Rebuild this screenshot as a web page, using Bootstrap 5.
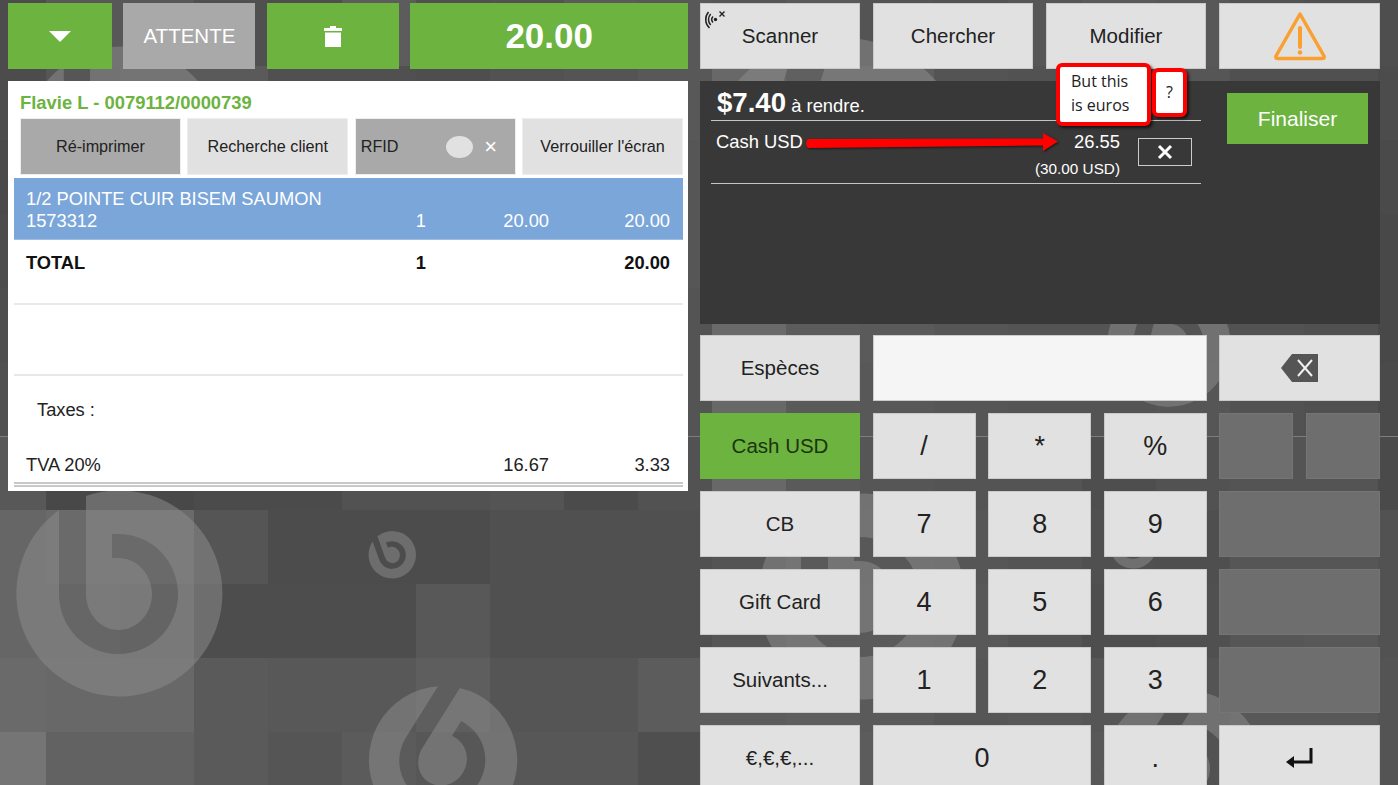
<!DOCTYPE html>
<html lang="fr">
<head>
  <meta charset="UTF-8" />
  <meta name="viewport" content="width=device-width, initial-scale=1" />
  <title>Caisse</title>
  <link href="https://cdn.jsdelivr.net/npm/bootstrap@5.3.0/dist/css/bootstrap.min.css" rel="stylesheet" />
  <style>
    body {
      background-color: #555;
      font-family: "Liberation Sans", Arial, sans-serif;
      color: #222;
    }
    .pos-screen { width: 1398px; height: 785px; }
    .bg-art { left: 0; top: 0; width: 1398px; height: 785px; }
    .pos-cols { gap: 12px; padding: 3px 18px 0 8px; }
    .pos-side { width: 680px; flex: none; }

    .pad-btn {
      padding: 0;
      border: 1px solid #c9c9c9;
      border-radius: 0;
      background-color: #e1e1e1;
      color: #222;
      font-size: 20.5px;
      line-height: 1.2;
    }
    .pad-btn.is-green { background-color: #6cb33f; border-color: #6cb33f; color: #fff; }
    .pad-btn.is-gray { background-color: #a9a9a9; border-color: #a9a9a9; color: #fff; }
    .pad-btn.is-off { background-color: #6e6e6e; border-color: #757575; }
    .pad-btn.is-key { font-size: 27px; }
    .pad-btn.is-green.on-dark { color: #1c3310; }

    .top-left { display: grid; grid-template-columns: 104px 132px 132px 278px; column-gap: 11.4px; height: 66px; margin-bottom: 12px; }
    .top-right { display: grid; grid-template-columns: 160px 160px 160px 161px; column-gap: 13px; height: 66px; margin-bottom: 12px; }
    .total-big { font-size: 35px; font-weight: 700; }

    .ticket { height: 410px; background: #fff; padding-top: 10px; }
    .ticket-title { color: #6cb33f; font-size: 18.4px; font-weight: 700; height: 27px; line-height: 24px; padding-left: 12px; }
    .ticket-actions { display: grid; grid-template-columns: repeat(4, 1fr); column-gap: 6.4px; height: 57px; margin: 0 5px 3px 12px; }
    .ticket-actions .pad-btn { font-size: 16.2px; border-color: #eee; padding-top: 1px; }
    .ticket-actions .is-gray { color: #222; }
    .rfid-dot { width: 27px; height: 22px; border-radius: 50%; background: #e1e1e1; margin-left: auto; }
    .rfid-x { color: #fff; font-size: 22px; width: 36px; text-align: center; margin-right: 6px; }
    .rfid-label { padding-left: 5px; }

    .line-row { display: grid; grid-template-columns: 1fr 60px 123px 121px; padding: 0 13px 0 12px; margin: 0 5px 0 6px; font-size: 18.3px; line-height: 21px; }
    .line-sel { background: #7ba6da; color: #fff; height: 62px; padding-top: 10px; line-height: 21.500px; border-bottom: 1px solid #9dbde3; }
    .on-line2 { padding-top: 21.500px; }
    .line-total { height: 65px; padding-top: 12px; font-weight: 700; color: #111; border-bottom: 2px solid #e8e8e8; margin-top: 0; }
    .line-gap { height: 71px; margin: 0 5px 0 6px; border-bottom: 2px solid #e8e8e8; }
    .tax-head { margin: 23px 0 0 29px; font-size: 18.3px; line-height: 21px; }
    .tax-row { margin-top: 34px; height: 33px; padding-bottom: 8px; border-bottom: 5px double #c8c8c8; }

    .pay-panel { height: 243px; background: #383838; color: #fff; margin-bottom: 11px; }
    .pay-lines { width: 490px; margin-left: 11px; }
    .pay-change { height: 40px; padding: 4px 0 0 6px; border-bottom: 1px solid #c4c4c4; font-size: 18.4px; line-height: 36px; }
    .pay-change b { font-size: 27.6px; }
    .pay-line { height: 63px; padding: 10px 9px 0 5px; border-bottom: 1px solid #c4c4c4; font-size: 18.4px; line-height: 22px; }
    .pay-sub { font-size: 15.3px; margin-top: 5px; }
    .pay-x { width: 54px; height: 28px; margin: 7px 0 0 18px; border: 1px solid #ccc; background: transparent; padding: 0; }
    .pay-end { width: 141px; height: 51px; margin: 12px 0 0 26px; font-size: 21px; }

    .keypad {
      display: grid;
      grid-template-columns: 160px 103px 103px 103px 74px 74px;
      grid-auto-rows: 66px;
      gap: 12px 12.6px;
    }
    .key-wide-3 { grid-column: span 3; }
    .key-wide-2 { grid-column: span 2; }
    .key-input { background: #f5f5f5; border: 1px solid #ccc; }

    .note-box {
      background: #fff;
      border: 4px solid #f00;
      border-radius: 6px;
      box-shadow: 2px 2px 3px rgba(0, 0, 0, .65);
      font-family: "Open Sans", sans-serif;
      font-size: 16px;
      line-height: 24px;
      color: #222;
    }
    .note-a { left: 1056px; top: 63px; width: 95px; height: 63px; padding: 2px 0 0 11px; }
    .note-b { left: 1152px; top: 68px; width: 35px; height: 49px; text-align: center; padding-top: 8px; }
    .note-arrow { left: 0; top: 0; width: 1398px; height: 785px; pointer-events: none; filter: drop-shadow(1px 1px 1px rgba(0, 0, 0, .6)); }
  </style>
</head>
<body>

  <div class="pos-screen position-relative overflow-hidden">

    <!-- Background mosaic + logos -->
    <svg class="bg-art position-absolute" viewBox="0 0 1398 785" aria-hidden="true">
      <defs>
        <path id="logoMark" d="M-59,-84 A103,103 0 1 0 -32,-98 L-32,0 C-32,21 -16,36 0,36 C19,36 34,20 34,0 C34,-20 19,-36 0,-36 L-6,-36 L-6,-60 L0,-60 C34,-60 60,-33 60,0 C60,33 34,60 0,60 C-33,60 -59,33 -59,0 Z" fill="#8c8c8c" fill-opacity=".53" />
      </defs>
      <g id="tiles"></g>
      <rect x="0" y="436" width="1398" height="1" fill="#7d7d7d" />
      <use href="#logoMark" transform="translate(118 594)" />
      <use href="#logoMark" transform="translate(392 555) rotate(-20) scale(.23)" />
      <use href="#logoMark" transform="translate(442 760) rotate(32) scale(.72)" />
      <use href="#logoMark" transform="translate(121 147) scale(.97)" />
      <use href="#logoMark" transform="translate(835 171) rotate(18) scale(1.3)" />
      <use href="#logoMark" transform="translate(860 597)" />
      <use href="#logoMark" transform="translate(1133 545) scale(.23)" />
      <use href="#logoMark" transform="translate(1168 345) rotate(15) scale(.6)" />
      <use href="#logoMark" transform="translate(1183 770) rotate(32) scale(.78)" />
    </svg>

    <div class="pos-cols d-flex position-relative">

      <!-- Left column: ticket -->
      <div class="pos-side">
        <div class="top-left">
          <button class="btn pad-btn is-green d-flex align-items-center justify-content-center">
            <svg width="22" height="11" viewBox="0 0 22 11"><polygon points="0,0 22,0 11,11" fill="#fff" /></svg>
          </button>
          <button class="btn pad-btn is-gray">ATTENTE</button>
          <button class="btn pad-btn is-green d-flex align-items-center justify-content-center">
            <svg width="18" height="21" viewBox="0 0 18 21"><path d="M6 0h6v2h6v3H0V2h6zM1 6.500h16V21H1z" fill="#fff" /></svg>
          </button>
          <button class="btn pad-btn is-green total-big">20.00</button>
        </div>

        <div class="ticket">
          <div class="ticket-title">Flavie L - 0079112/0000739</div>
          <div class="ticket-actions">
            <button class="btn pad-btn is-gray">Ré-imprimer</button>
            <button class="btn pad-btn">Recherche client</button>
            <button class="btn pad-btn is-gray d-flex align-items-center">
              <span class="rfid-label">RFID</span>
              <span class="rfid-dot"></span>
              <span class="rfid-x">×</span>
            </button>
            <button class="btn pad-btn">Verrouiller l'écran</button>
          </div>

          <div class="line-row line-sel">
            <div>1/2 POINTE CUIR BISEM SAUMON<br />1573312</div>
            <div class="text-end on-line2">1</div>
            <div class="text-end on-line2">20.00</div>
            <div class="text-end on-line2">20.00</div>
          </div>
          <div class="line-row line-total">
            <div>TOTAL</div>
            <div class="text-end">1</div>
            <div></div>
            <div class="text-end">20.00</div>
          </div>
          <div class="line-gap"></div>
          <div class="tax-head">Taxes :</div>
          <div class="line-row tax-row">
            <div>TVA 20%</div>
            <div></div>
            <div class="text-end">16.67</div>
            <div class="text-end">3.33</div>
          </div>
        </div>
      </div>

      <!-- Right column: payment -->
      <div class="pos-side">
        <div class="top-right">
          <button class="btn pad-btn position-relative">
            Scanner
            <svg class="position-absolute top-0 start-0" width="28" height="28" viewBox="0 0 28 28">
              <circle cx="14.500" cy="15.500" r="1.700" fill="#222" />
              <path d="M12 12.500a4.500 4.500 0 0 0 0 6M9.700 10a8 8 0 0 0 0 11M7.500 8a11.500 11.500 0 0 0 1 16" fill="none" stroke="#222" stroke-width="1.500" />
              <path d="M18.500 7.500l5 5M23.500 7.500l-5 5" stroke="#222" stroke-width="1.400" />
            </svg>
          </button>
          <button class="btn pad-btn">Chercher</button>
          <button class="btn pad-btn">Modifier</button>
          <button class="btn pad-btn d-flex align-items-center justify-content-center">
            <svg width="54" height="50" viewBox="0 0 54 50">
              <path d="M27 3 L51 45 Q52 47.500 49 47.500 L5 47.500 Q2 47.500 3 45 Z" fill="none" stroke="#f9a030" stroke-width="3.500" stroke-linejoin="round" />
              <path d="M27 17v19" stroke="#f9a030" stroke-width="4" stroke-linecap="round" />
              <circle cx="27" cy="41.500" r="2.200" fill="#f9a030" />
            </svg>
          </button>
        </div>

        <div class="pay-panel d-flex">
          <div class="pay-lines">
            <div class="pay-change"><b>$7.40</b> à rendre.</div>
            <div class="pay-line d-flex">
              <div class="flex-grow-1">Cash USD</div>
              <div class="text-end">
                <div>26.55</div>
                <div class="pay-sub">(30.00 USD)</div>
              </div>
              <button class="btn pay-x rounded-0 d-flex align-items-center justify-content-center">
                <svg width="16" height="16" viewBox="0 0 16 16"><path d="M2 2l12 12M14 2L2 14" stroke="#fff" stroke-width="3" /></svg>
              </button>
            </div>
          </div>
          <button class="btn pad-btn is-green pay-end">Finaliser</button>
        </div>

        <div class="keypad">
          <button class="btn pad-btn">Espèces</button>
          <div class="key-input key-wide-3"></div>
          <button class="btn pad-btn key-wide-2 d-flex align-items-center justify-content-center">
            <svg width="38" height="28" viewBox="0 0 38 28">
              <path d="M11 0H37V28H11L0 14Z" fill="#555" />
              <path d="M17 6l14 16M31 6L17 22" stroke="#f1f1f1" stroke-width="2" />
            </svg>
          </button>

          <button class="btn pad-btn is-green on-dark">Cash USD</button>
          <button class="btn pad-btn is-key">/</button>
          <button class="btn pad-btn is-key">*</button>
          <button class="btn pad-btn is-key">%</button>
          <div class="pad-btn is-off"></div>
          <div class="pad-btn is-off"></div>

          <button class="btn pad-btn">CB</button>
          <button class="btn pad-btn is-key">7</button>
          <button class="btn pad-btn is-key">8</button>
          <button class="btn pad-btn is-key">9</button>
          <div class="pad-btn is-off key-wide-2"></div>

          <button class="btn pad-btn">Gift Card</button>
          <button class="btn pad-btn is-key">4</button>
          <button class="btn pad-btn is-key">5</button>
          <button class="btn pad-btn is-key">6</button>
          <div class="pad-btn is-off key-wide-2"></div>

          <button class="btn pad-btn">Suivants...</button>
          <button class="btn pad-btn is-key">1</button>
          <button class="btn pad-btn is-key">2</button>
          <button class="btn pad-btn is-key">3</button>
          <div class="pad-btn is-off key-wide-2"></div>

          <button class="btn pad-btn">€,€,€,...</button>
          <button class="btn pad-btn is-key key-wide-2">0</button>
          <button class="btn pad-btn is-key">.</button>
          <button class="btn pad-btn key-wide-2 d-flex align-items-center justify-content-center">
            <svg width="27" height="21" viewBox="0 0 27 21"><path d="M25 0v14H6" fill="none" stroke="#111" stroke-width="3" /><polygon points="0,14 8,8 8,20" fill="#111" /></svg>
          </button>
        </div>
      </div>
    </div>

    <!-- Annotations drawn over the screenshot -->
    <svg class="note-arrow position-absolute" viewBox="0 0 1398 785" aria-hidden="true">
      <path d="M808 139 L1043 138.500 L1043 133 L1058 141.500 L1043 151 L1043 145.500 L808 148 Q804 143.500 808 139 Z" fill="#f00" />
    </svg>
    <div class="note-box note-a position-absolute">But this<br />is euros</div>
    <div class="note-box note-b position-absolute">?</div>
  </div>

  <script>
    // mosaic tiles, 74px grid, one hex gray per cell
    const tileRows = [
      "4c 58 58 50 4e 5c 50 52 5a 58 56 5a 54 52 56 5a 58 52 50 4e",
      "4c 56 5a 5a 50 50 4e 52 54 58 68 60 5e 54 52 58 56 50 50 4c",
      "4a 54 56 56 50 50 50 52 54 56 5a 5a 58 54 52 56 54 50 50 4a",
      "4c 54 54 54 50 50 50 52 54 56 5c 5a 58 54 52 54 54 52 50 48",
      "4e 52 52 52 50 50 52 52 54 54 6a 5c 5a 56 54 54 54 52 50 48",
      "50 50 50 50 50 52 52 54 54 54 68 5a 58 56 54 54 56 52 50 4a",
      "58 48 48 4b 4b 52 52 54 4b 52 68 5a 56 54 54 4e 52 54 54 4a",
      "66 6a 6a 55 4c 4c 4c 50 50 50 54 5a 58 56 54 50 4f 56 56 52",
      "66 66 64 4d 4d 4d 58 50 50 50 56 5c 5a 58 54 4e 50 56 58 52",
      "6a 68 68 5a 58 58 5e 55 55 5c 5c 5e 5a 56 58 56 54 58 58 54",
      "75 62 62 5a 55 5b 57 57 57 4f 5a 58 5c 5a 56 58 52 56 58 54"
    ];
    const tiles = document.getElementById("tiles");
    tileRows.forEach((row, r) => {
      row.split(" ").forEach((gray, c) => {
        const rect = document.createElementNS("http://www.w3.org/2000/svg", "rect");
        rect.setAttribute("x", -28 + c * 74);
        rect.setAttribute("y", -8 + r * 74);
        rect.setAttribute("width", 74);
        rect.setAttribute("height", 74);
        rect.setAttribute("fill", `#${gray}${gray}${gray}`);
        tiles.appendChild(rect);
      });
    });
  </script>

  <script src="https://cdn.jsdelivr.net/npm/bootstrap@5.3.0/dist/js/bootstrap.bundle.min.js"></script>
</body>
</html>
